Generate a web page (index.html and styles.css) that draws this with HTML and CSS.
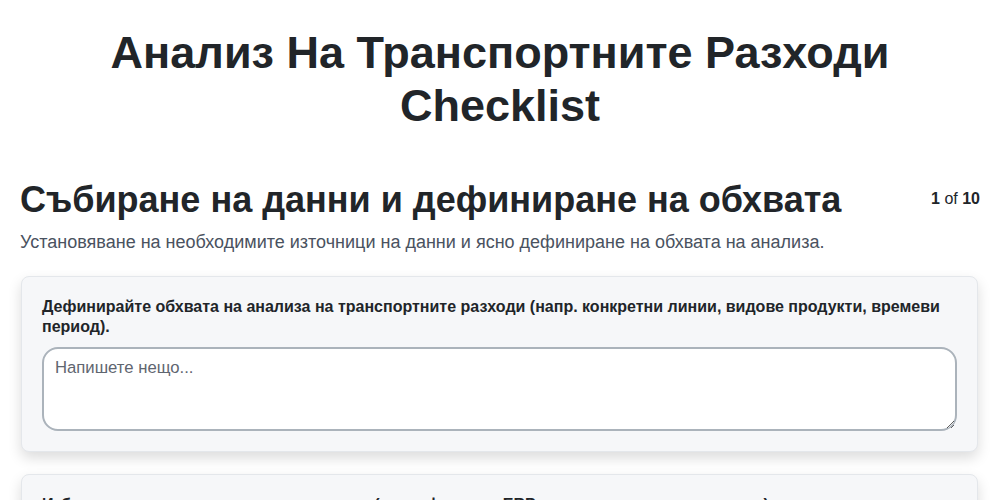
FILE: index.html
```html
<!DOCTYPE html>
<html lang="bg">
<head>
<meta charset="utf-8">
<link rel="stylesheet" href="styles.css">
</head>
<body>
<div class="page">
  <h1 class="title">Анализ На Транспортните Разходи Checklist</h1>
  <div class="section-head">
    <h2 class="section-title">Събиране на данни и дефиниране на обхвата</h2>
    <div class="counter"><b>1</b> of <b>10</b></div>
  </div>
  <p class="section-desc">Установяване на необходимите източници на данни и ясно дефиниране на обхвата на анализа.</p>
  <div class="card">
    <label class="card-label">Дефинирайте обхвата на анализа на транспортните разходи (напр. конкретни линии, видове продукти, времеви период).</label>
    <textarea class="field" placeholder="Напишете нещо..."></textarea>
  </div>
  <div class="card">
    <label class="card-label">Изберете ключовите източници на данни (напр. фактури, ERP системи, логистични отчети).</label>
    <textarea class="field" placeholder="Напишете нещо..."></textarea>
  </div>
</div>
</body>
</html>
```
FILE: styles.css
```css
* { box-sizing: border-box; }
body {
  margin: 0;
  font-family: "Liberation Sans", Arial, sans-serif;
  color: #212529;
  background: #fff;
}
.page {
  padding: 0 20px;
}
.title {
  margin: 0;
  padding-top: 26px;
  text-align: center;
  font-size: 45px;
  line-height: 53px;
  font-weight: 700;
  color: #212529;
}
.section-head {
  display: flex;
  justify-content: space-between;
  align-items: flex-start;
  margin-top: 46px;
}
.section-title {
  margin: 0;
  font-size: 36px;
  line-height: 44px;
  font-weight: 700;
  color: #212529;
}
.counter {
  font-size: 16px;
  padding-top: 12px;
  color: #212529;
}
.section-desc {
  margin: 8px 0 0;
  font-size: 18px;
  line-height: 24px;
  color: #4a5260;
}
.card {
  margin-top: 22px;
  margin-left: 1px;
  margin-right: 2px;
  background: #f6f7f9;
  border: 1px solid #e4e7eb;
  border-radius: 8px;
  padding: 20px 20px 20px;
  box-shadow: 0 6px 14px rgba(0,0,0,0.14);
}
.card-label {
  display: block;
  font-size: 16px;
  line-height: 20px;
  font-weight: 700;
  color: #212529;
}
.field {
  display: block;
  width: 100%;
  height: 84px;
  margin-top: 10px;
  border: 2px solid #abb3bb;
  border-radius: 16px;
  padding: 9px 11px;
  font-family: "Liberation Sans", Arial, sans-serif;
  font-size: 16.7px;
  background: #fff;
  resize: vertical;
}
.field::placeholder { color: #5f6670; }
```
